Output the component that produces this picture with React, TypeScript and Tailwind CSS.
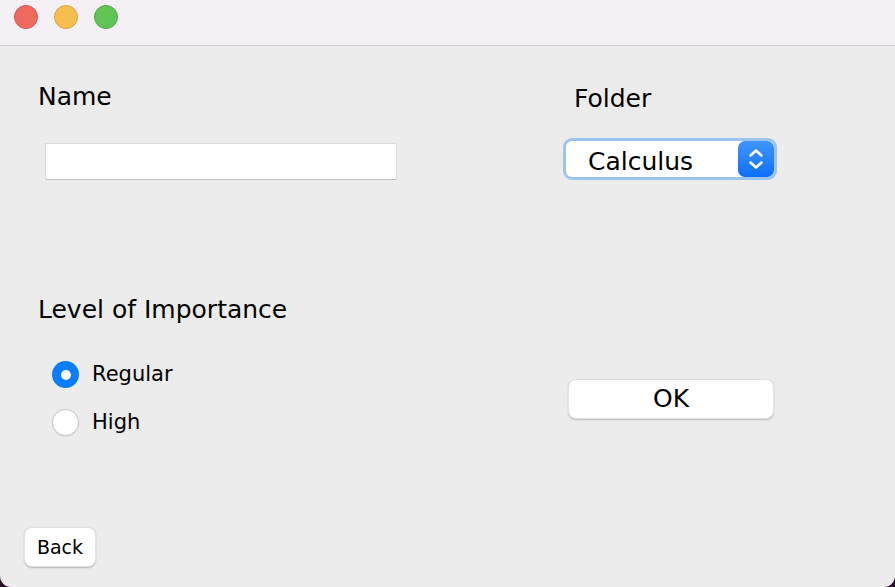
import React from "react";

const font = { fontFamily: '"DejaVu Sans", "Liberation Sans", sans-serif' };

function Light({ color, border }: { color: string; border: string }) {
  return (
    <div
      className="w-[24px] h-[24px] rounded-full border"
      style={{ backgroundColor: color, borderColor: border }}
    />
  );
}

export default function App() {
  return (
    <div className="w-[895px] h-[587px] bg-[#2a0f2a] overflow-hidden" style={font}>
      <div className="w-full h-full rounded-b-[11px] overflow-hidden bg-[#ececec] flex flex-col text-black">
        {/* title bar */}
        <div className="h-[46px] shrink-0 bg-[#f5eff6] border-b border-[#cfcbd0] flex items-start gap-[16px] pl-[14px] pt-[5px]">
          <Light color="#ee6a5f" border="#d9574d" />
          <Light color="#f5bf4f" border="#dea63a" />
          <Light color="#61c454" border="#4fae44" />
        </div>

        {/* content */}
        <div className="flex-1 flex flex-col">
          <div className="flex">
            {/* left column */}
            <div className="w-[563px] shrink-0 flex flex-col pl-[38px]">
              <div className="mt-[39px] text-[25px] leading-[24px]">Name</div>
              <div className="mt-[34px] ml-[7px] w-[352px] h-[37px] bg-white border border-[#dcdcdc] border-b-[#c2c2c2]" />
              <div className="mt-[118px] text-[25px] leading-[24px]">Level of Importance</div>
              <div className="mt-[39px] ml-[14px] flex flex-col gap-[21px]">
                <div className="flex items-center gap-[13px]">
                  <div className="w-[27px] h-[27px] rounded-full bg-[#0a7cff] flex items-center justify-center">
                    <div className="w-[10px] h-[10px] rounded-full bg-white" />
                  </div>
                  <span className="text-[21px] leading-[27px]">Regular</span>
                </div>
                <div className="flex items-center gap-[13px]">
                  <div className="w-[27px] h-[27px] rounded-full bg-white border border-[#c8c8c8] shadow-[0_0.5px_1px_rgba(0,0,0,0.12)]" />
                  <span className="text-[21px] leading-[27px]">High</span>
                </div>
              </div>
            </div>

            {/* right column */}
            <div className="flex flex-col">
              <div className="mt-[41px] ml-[11px] text-[25px] leading-[24px]">Folder</div>
              <div className="mt-[27px] w-[214px] h-[42px] rounded-[9px] border-[3px] border-[#9cc4f3] bg-white flex items-center justify-between pl-[22px]">
                <span className="text-[25px] leading-[24px] mt-[5px]">Calculus</span>
                <div className="w-[36px] h-[36px] rounded-[7px] bg-gradient-to-b from-[#3f95fb] to-[#0b6ff8] flex items-center justify-center">
                  <svg width="16" height="24" viewBox="0 0 16 24" fill="none" stroke="white" strokeWidth="2.6" strokeLinecap="round" strokeLinejoin="round">
                    <path d="M2.5 8.5 L8 3.5 L13.5 8.5" />
                    <path d="M2.5 15.5 L8 20.5 L13.5 15.5" />
                  </svg>
                </div>
              </div>
              <div className="mt-[199px] ml-[5px] w-[206px] h-[40px] rounded-[8px] bg-white border border-[#e2e2e2] shadow-[0_1px_1.5px_rgba(0,0,0,0.22)] flex items-center justify-center">
                <span className="text-[25px] leading-[24px]">OK</span>
              </div>
            </div>
          </div>

          <div className="mt-auto mb-[20px] ml-[24px] w-[72px] h-[40px] rounded-[8px] bg-white border border-[#e2e2e2] shadow-[0_1px_1.5px_rgba(0,0,0,0.22)] flex items-center justify-center">
            <span className="text-[19px] leading-[20px]">Back</span>
          </div>
        </div>
      </div>
    </div>
  );
}
